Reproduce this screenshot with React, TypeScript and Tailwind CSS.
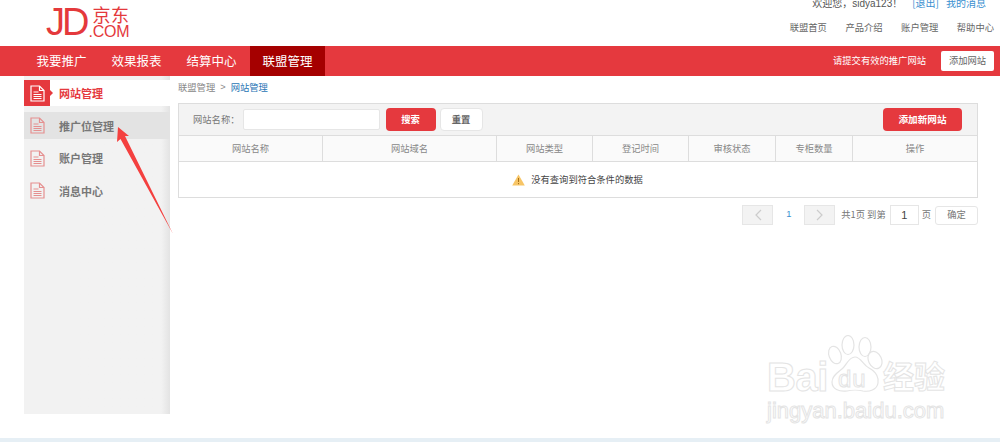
const cjk = "font-['Noto_Sans_CJK_SC','Liberation_Sans',sans-serif]";

const navItems = ["我要推广", "效果报表", "结算中心", "联盟管理"];
const topLinks = ["联盟首页", "产品介绍", "账户管理", "帮助中心"];
const sideItems = ["推广位管理", "账户管理", "消息中心"];
const columns = [
    { name: "网站名称", cls: "w-[144px]" },
    { name: "网站域名", cls: "w-[174px]" },
    { name: "网站类型", cls: "w-[96px]" },
    { name: "登记时间", cls: "w-[96px]" },
    { name: "审核状态", cls: "w-[87px]" },
    { name: "专柜数量", cls: "w-[77px]" },
    { name: "操作", cls: "flex-1" },
];

function DocIcon({ color, size = 15 }: { color: string; size?: number }) {
    return (
        <svg width={size} height={size + 2} viewBox="0 0 15 17" fill="none" stroke={color} strokeWidth="1.2">
            <path d="M1 1h8.5L14 5.5V16H1z" />
            <path d="M9.5 1v4.5H14" />
            <path d="M3.5 7h5M3.5 9.500h8M3.500 11.500h8M3.500 13.500h8" />
        </svg>
    );
}

function Logo() {
    return (
        <div className="flex items-start ml-[46px] pt-[3px] text-[#e4393c] font-['Liberation_Sans',sans-serif]">
            <span className="text-[38px] leading-[38px] tracking-[-3px]">JD</span>
            <div className="flex flex-col items-end w-[42px] ml-[1px]">
                <span className={`${cjk} text-[18px] leading-[20px] tracking-[0.5px] mt-[1px]`}>京东</span>
                <span className="text-[16px] leading-[14px] tracking-[-0.2px] mt-[1px]">.COM</span>
            </div>
        </div>
    );
}

function Watermark() {
    const outline = "text-white [-webkit-text-stroke:1px_#e4e4e4]";
    return (
        <div className="absolute left-[767px] top-[334px] w-[182px] h-[90px] pointer-events-none">
            <span className={`absolute left-0 top-[21px] text-[40px] leading-[44px] font-bold tracking-[-0.5px] font-['Liberation_Sans',sans-serif] ${outline}`}>Bai</span>
            <svg className="absolute left-[60px] top-[1px]" width="56" height="58" viewBox="0 0 56 58" fill="#fff" stroke="#e4e4e4" strokeWidth="1.2">
                <ellipse cx="8" cy="20" rx="6" ry="9" transform="rotate(-20 8 20)" />
                <ellipse cx="21" cy="10" rx="6" ry="9.500" />
                <ellipse cx="38" cy="12" rx="6" ry="9.500" />
                <ellipse cx="48" cy="25" rx="6.500" ry="9" transform="rotate(-25 48 25)" />
                <path d="M28 22C34 22 36 30 42 33 50 37 52 44 51 48 50 55 42 57 36 56 32 55 24 55 20 56 12 57 5 54 5 47 5 40 12 37 16 33 20 29 22 22 28 22z" />
            </svg>
            <span className="absolute left-[71px] top-[33px] text-[24px] leading-[24px] tracking-[1px] font-['Liberation_Sans',sans-serif] text-white [-webkit-text-stroke:1px_#e4e4e4]">du</span>
            <span className={`${cjk} absolute left-[116px] top-[23px] text-[31px] leading-[36px] font-bold ${outline}`}>经验</span>
            <span className={`absolute left-0 top-[64px] text-[22px] leading-[26px] font-['Liberation_Sans',sans-serif] whitespace-nowrap ${outline}`}>jingyan.baidu.com</span>
        </div>
    );
}

export default function App() {
    return (
        <div className={`${cjk} relative flex flex-col w-[1000px] h-[442px] overflow-hidden bg-white text-[9.3px] text-[#666]`}>
            <div className="flex justify-between h-[46px]">
                <Logo />
                <div className="flex flex-col items-end pr-[6px]">
                    <div className="flex gap-[7px] -mt-[4px] h-[14px] leading-[14px] text-[10px] mr-[8px]">
                        <span className="text-[#555]">欢迎您，<span className="font-['Liberation_Sans',sans-serif]">sidya123</span>！</span>
                        <span className="text-[#3a8fd0] ml-[3px]">[退出]</span>
                        <span className="text-[#3a8fd0]">我的消息</span>
                    </div>
                    <div className="flex gap-[18.5px] mt-[10px] leading-[14px] text-[#666] text-[9.300px]">
                        {topLinks.map(link => (
                            <span key={link}>{link}</span>
                        ))}
                    </div>
                </div>
            </div>

            <div className="flex items-center h-[30px] bg-[#e5393e] pl-[24px] pr-[6px]">
                {navItems.map((item, i) => (
                    <div
                        key={item}
                        className={`flex items-center justify-center w-[75px] h-full text-[12.500px] text-white ${i === 3 ? "bg-[#a50000] ml-px" : ""}`}
                    >
                        {item}
                    </div>
                ))}
                <span className="ml-auto mr-[15px] text-white text-[9.300px]">请提交有效的推广网站</span>
                <div className="flex items-center justify-center w-[53px] h-[20px] bg-white rounded-[2px] text-[#666] text-[9.300px]">添加网站</div>
            </div>

            <div className="flex flex-1 items-start">
                <aside className="flex flex-col w-[146px] h-[338px] ml-[24px] pt-[4px] bg-gradient-to-r from-[#f2f2f2] from-[94%] to-[#e3e3e3]">
                    <div className="relative flex items-center h-[26px] bg-white">
                        <div className="flex items-center justify-center w-[26px] h-full bg-[#e5393e]">
                            <DocIcon color="#fff" />
                        </div>
                        <div className="w-0 h-0 border-y-[3px] border-y-transparent border-l-[3px] border-l-[#e5393e]" />
                        <span className="ml-[6px] text-[11px] font-bold text-[#e5393e]">网站管理</span>
                    </div>
                    <div className="flex flex-col mt-[6px]">
                        {sideItems.map((item, i) => (
                            <div
                                key={item}
                                className={`flex items-center h-[27px] pl-[6px] mb-[5.5px] text-[11px] font-bold text-[#777] ${i === 0 ? "bg-[#e3e3e3]" : ""}`}
                            >
                                <DocIcon color="#e58f8f" />
                                <span className="ml-[14px] pt-px">{item}</span>
                            </div>
                        ))}
                    </div>
                </aside>

                <main className="flex flex-col w-[800px] ml-[8px]">
                    <div className="flex items-center h-[27px] pb-[4px] text-[#888]">
                        <span>联盟管理</span>
                        <span className="mx-[5px] font-['Liberation_Sans',sans-serif]">&gt;</span>
                        <span className="text-[#2a76b5]">网站管理</span>
                    </div>

                    <div className="flex flex-col border border-[#ddd]">
                        <div className="flex items-center h-[31px] bg-[#f3f3f3] pl-[14px] pr-[15px] text-[#777]">
                            <span>网站名称：</span>
                            <div className="w-[137px] h-[21px] ml-[3px] bg-white border border-[#e6e6e6] rounded-[2px]" />
                            <button className="w-[50px] h-[23px] ml-[6px] bg-[#e5393e] rounded-[4px] text-white font-bold">搜索</button>
                            <button className="w-[43px] h-[23px] ml-[4px] bg-white border border-[#e6e6e6] rounded-[4px] text-[#666] font-bold">重置</button>
                            <button className="w-[79px] h-[23px] ml-auto bg-[#e5393e] rounded-[4px] text-white font-bold text-[9.600px]">添加新网站</button>
                        </div>
                        <div className="flex h-[27px] bg-[#fafafa] border-y border-[#ddd] text-[#888]">
                            {columns.map((col, i) => (
                                <div
                                    key={col.name}
                                    className={`flex items-center justify-center ${col.cls} ${i < columns.length - 1 ? "border-r border-[#ddd]" : ""}`}
                                >
                                    {col.name}
                                </div>
                            ))}
                        </div>
                        <div className="flex items-center justify-center h-[35px] bg-white text-[#444] pr-[1px]">
                            <svg width="13" height="12" viewBox="0 0 13 12" className="mr-[6px]">
                                <path d="M6.500.5 12.800 11.500H.2z" fill="#f7c566" />
                                <path d="M6.500 4v4M6.500 9v1.200" stroke="#a8701a" strokeWidth="1" />
                            </svg>
                            <span>没有查询到符合条件的数据</span>
                        </div>
                    </div>

                    <div className="flex items-center justify-end h-[20px] mt-[7px] text-[#777]">
                        <div className="flex items-center justify-center w-[31px] h-[20px] bg-[#f3f3f3] border border-[#e6e6e6]">
                            <svg width="8" height="12" viewBox="0 0 8 12" fill="none" stroke="#ccc" strokeWidth="1.200"><path d="M7 1 2 6l5 5" /></svg>
                        </div>
                        <span className="w-[31px] text-center text-[#3a8fd0] font-['Liberation_Sans',sans-serif]">1</span>
                        <div className="flex items-center justify-center w-[31px] h-[20px] bg-[#f3f3f3] border border-[#e6e6e6]">
                            <svg width="8" height="12" viewBox="0 0 8 12" fill="none" stroke="#ccc" strokeWidth="1.200"><path d="m1 1 5 5-5 5" /></svg>
                        </div>
                        <span className="ml-[6px]">共1页 到第</span>
                        <div className="flex items-center justify-center w-[29px] h-[20px] ml-[4px] border border-[#e6e6e6] text-[11px] text-[#444] font-['Liberation_Sans',sans-serif]">1</div>
                        <span className="ml-[3px]">页</span>
                        <button className="w-[43px] h-[19px] ml-[4px] bg-white border border-[#e6e6e6] rounded-[3px] text-[#777]">确定</button>
                    </div>
                </main>
            </div>

            <div className="h-[4px] bg-[#e6eff5]" />

            <svg className="absolute left-[100px] top-[115px]" width="80" height="125" viewBox="0 0 80 125">
                <path d="M18 12 L29 21 L25 21 L73 119 L20.500 24 L17 27z" fill="#f4403f" />
            </svg>

            <Watermark />
        </div>
    );
}
